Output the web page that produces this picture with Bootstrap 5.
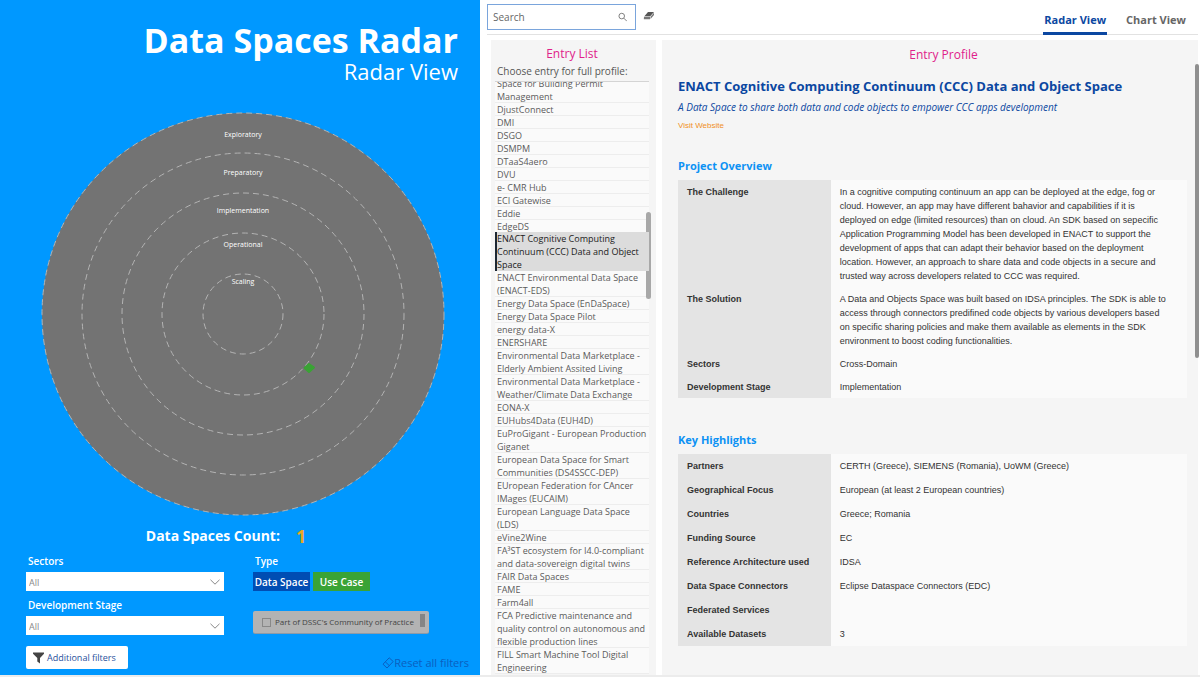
<!DOCTYPE html>
<html lang="en">
<head>
<meta charset="utf-8">
<meta name="viewport" content="width=device-width, initial-scale=1">
<title>Data Spaces Radar</title>
<link href="https://cdn.jsdelivr.net/npm/bootstrap@5.3.0/dist/css/bootstrap.min.css" rel="stylesheet">
<style>
  :root { --sky: #0098ff; --navy: #0b47a1; --pink: #e0218a; --orange: #f0901e; --panel: #f5f5f5; }
  body { font-family: "Open Sans", "Noto Sans", sans-serif; font-size: 9px; color: #555; background: #fff; }
  .app { min-height: 100vh; border-bottom: 2px solid #ececec; }

  /* radar side */
  .radar-side { background: var(--sky); color: #fff; flex: 0 0 100%; padding-bottom: 2px; }
  .radar-title { font-size: 34px; line-height: 40px; font-weight: 700; }
  .radar-sub { font-size: 22px; line-height: 22px; font-weight: 400; }
  .radar-head { padding: 20px 22px 0 26px; }
  .radar-plot { padding: 30px 20px 0 26px; }
  .radar-plot svg { width: 100%; max-width: 404px; }
  .radar-plot text { font-size: 7px; fill: #fff; text-anchor: middle; }
  .count-line { font-size: 14px; line-height: 20px; font-weight: 700; padding: 10px 28px 0 0; }
  .count-line output { color: #eba722; font-size: 18px; }
  .filters { padding: 7px 11px 0 26px; }
  .filter-col { width: 198px; }
  .filter-label { font-size: 10px; line-height: 16px; font-weight: 600; padding-left: 2px; margin-bottom: 3px; display: block; }
  .filter-select { height: 19px; padding: 2px 20px 0 3px; font-size: 9px; line-height: 16px; color: #888; border: 0; border-radius: 0; margin-bottom: 6px;
    background: #fff url("data:image/svg+xml,%3Csvg xmlns='http://www.w3.org/2000/svg' viewBox='0 0 10 6'%3E%3Cpath d='M.5.8 5 5.2 9.500.8' fill='none' stroke='%23888'/%3E%3C/svg%3E") no-repeat right 4px center / 10px 6px; }
  .type-col { margin-left: 5px; }
  .type-buttons { gap: 3px; }
  .btn-type { width: 57px; height: 19px; padding: 0; font-size: 10px; line-height: 18px; font-weight: 600; color: #fff; border: 0; border-radius: 0; }
  .btn-type.is-space { background: #004db3; }
  .btn-type.is-case { background: #3aa335; }
  .practice { width: 176px; height: 22px; margin-top: 20px; padding: 0 4px 0 9px; background: #b3b3b3; color: #444; font-size: 8px; border-radius: 2px; box-shadow: 0 1px 0 #8c9aa8; gap: 4px; white-space: nowrap; }
  .practice input { width: 9px; height: 9px; margin: 0; appearance: none; border: 1px solid #888; }
  .practice i { width: 5px; height: 13px; background: #858585; margin: 0 0 3px auto; }
  .btn-more { height: 23px; padding: 0 12px 0 7px; margin-top: 5px; gap: 3px; font-size: 9px; line-height: 23px; background: #fff; color: #27509b; border: 0; border-radius: 2px; }
  .reset-link { color: #0b5fc0; font-size: 11px; line-height: 12px; text-decoration: none; }

  /* work side */
  .work-side { min-width: 0; padding: 0 2px 0 7px; }
  .topbar { height: 35px; border-bottom: 1px solid #e2e2e2; }
  .search-box { width: 149px; height: 26px; border: 1px solid #7aa5dc; border-radius: 0; margin-top: 4px; padding: 0 8px 0 5px; }
  .search-box input { font-size: 10px; color: #666; padding: 0; border: 0; box-shadow: none !important; background: none; min-width: 0; }
  .search-box input::placeholder { color: #666; }
  .erase { margin: 10px 0 0 6px; padding: 0; line-height: 1; }
  .view-tabs { gap: 18px; padding-right: 11px; }
  .view-tabs .nav-link { font-size: 11px; line-height: 24px; height: 35px; font-weight: 700; padding: 8px 1px 0; color: #666; border-radius: 0; border-bottom: 3px solid transparent; }
  .view-tabs .nav-link.active { color: var(--navy); border-color: var(--navy); }
  .panels { padding-top: 5px; gap: 6px; }
  .panel-title { font-size: 12px; line-height: 16px; color: var(--pink); text-align: center; font-weight: 400; margin: 0; }

  .entry-panel { background: var(--panel); margin-left: 4px; flex: 0 0 165px; padding: 6px 7px 1px 4px; }
  .entry-hint { font-size: 10px; line-height: 16px; height: 20px; padding: 1px 0 0 2px; margin: 0; border-bottom: 1px solid #d4d4d4; }
  .entry-scroll { flex: 1 1 0; min-height: 200px; overflow: hidden; background: #fafafa; }
  .entry-list { line-height: 13px; }
  .entry-list .list-group-item { padding: 0 0 0 2px; border: 0; background: none; color: #5a5a5a; box-shadow: inset 0 -1px #ededed; }
  .entry-list .list-group-item.active { background: #dcdcdc; color: #222; box-shadow: inset 2px 0 #1c2733; }
  .thumb { position: absolute; width: 5px; border-radius: 3px; background: #a8a8a8; }
  .entry-thumb { top: 172px; right: 5px; height: 87px; }
  .profile-thumb { top: 24px; right: -1px; height: 294px; width: 4px; background: #8f8f8f; }

  .profile-panel { background: var(--panel); min-width: 0; padding: 7px 11px 16px 16px; }
  .profile-panel .panel-title { padding-left: 22px; }
  .profile-name { font-size: 13px; line-height: 20px; font-weight: 700; color: var(--navy); margin: 13px 0 0; }
  .profile-tag { font-size: 10px; line-height: 16px; font-style: italic; color: var(--navy); margin: 3px 0 5px; }
  .site-link { font-family: "Liberation Sans", Arial, sans-serif; font-size: 8px; line-height: 12px; color: var(--orange); text-decoration: none; display: block; }
  .section-name { font-size: 11px; line-height: 16px; font-weight: 700; color: #0d92f4; margin: 26px 0 6px; }
  .section-gap { margin-top: 34px; }
  .facts { font-family: "Liberation Sans", Arial, sans-serif; font-size: 9px; line-height: 14px; color: #333; margin: 0; }
  .facts > tbody > tr > * { border: 0; vertical-align: top; color: #333; }
  .facts th { width: 30%; background: #e4e4e4; padding: 5px 9px 4px; }
  .facts td { background: #fafafa; padding: 5px 20px 4px 9px; }
  .facts-even th, .facts-even td { padding-bottom: 5px; }

  @media (min-width: 992px) {
    .app { height: 100vh; min-height: 640px; }
    .radar-side { flex: 0 0 40%; }
  }
</style>
</head>
<body>
<div class="app d-flex flex-wrap flex-lg-nowrap">

  <section class="radar-side d-flex flex-column">
    <header class="radar-head text-end">
      <h1 class="radar-title mb-0">Data Spaces Radar</h1>
      <p class="radar-sub mb-0">Radar View</p>
    </header>

    <div class="radar-plot text-center">
      <svg class="d-block mx-auto" viewBox="0 0 404 404" role="img" aria-label="Radar of development stages">
        <circle cx="202" cy="202" r="201" fill="#737373"/>
        <g fill="none" stroke="#b4b4b4" stroke-width="1" stroke-dasharray="6 4">
          <circle cx="202" cy="202" r="201"/>
          <circle cx="202" cy="202" r="161"/>
          <circle cx="202" cy="202" r="121"/>
          <circle cx="202" cy="202" r="81"/>
          <circle cx="202" cy="202" r="40"/>
        </g>
        <text x="202" y="25">Exploratory</text>
        <text x="202" y="63">Preparatory</text>
        <text x="202" y="101">Implementation</text>
        <text x="202" y="135">Operational</text>
        <text x="202" y="172">Scaling</text>
        <path d="M268 252 273 255.500 268 260 263.500 256Z" fill="#3aa335" stroke="#3aa335" stroke-width="2" stroke-linejoin="round"/>
      </svg>
    </div>

    <div class="count-line d-flex justify-content-center align-items-center gap-3">
      <span>Data Spaces Count:</span><output>1</output>
    </div>

    <div class="filters">
      <div class="d-flex gap-4">
        <div class="filter-col">
          <label class="filter-label" for="sectors">Sectors</label>
          <select id="sectors" class="form-select filter-select"><option>All</option></select>
          <label class="filter-label" for="stage">Development Stage</label>
          <select id="stage" class="form-select filter-select"><option>All</option></select>
        </div>
        <div class="type-col">
          <span class="filter-label">Type</span>
          <div class="type-buttons d-flex">
            <button type="button" class="btn btn-type is-space">Data Space</button>
            <button type="button" class="btn btn-type is-case">Use Case</button>
          </div>
          <label class="practice d-flex align-items-center"><input type="checkbox">Part of DSSC's Community of Practice<i></i></label>
        </div>
      </div>
      <div class="d-flex justify-content-between align-items-end">
        <button type="button" class="btn btn-more d-flex align-items-center">
          <svg width="11" height="12" viewBox="0 0 11 12"><path d="M0 .5h11v1.300L7 6v5.500L4.300 9.500V6L0 1.800Z" fill="#444"/></svg>
          Additional filters
        </button>
        <a class="reset-link d-flex align-items-center" href="#"><svg width="12" height="12" viewBox="0 0 12 12" fill="none" stroke="#0b5fc0"><path d="M7.200.8 11.200 4.500 5 11 1 7.200ZM3.300 4.800 7.300 8.600"/></svg>Reset all filters</a>
      </div>
    </div>
  </section>

  <main class="work-side d-flex flex-column flex-grow-1">
    <div class="topbar d-flex align-items-start">
      <div class="search-box d-flex align-items-center">
        <input type="search" class="form-control" placeholder="Search" aria-label="Search">
        <svg width="10" height="10" viewBox="0 0 10 10" fill="none" stroke="#777"><circle cx="4" cy="4" r="3"/><path d="m6.200 6.200 3.300 3.300"/></svg>
      </div>
      <button type="button" class="btn erase" aria-label="Clear"><svg class="d-block" width="12" height="10" viewBox="0 0 12 10"><path d="M5 1H11L7.200 5.300H1.400Z" fill="#555"/><path d="M1 5.800H7V8.300H.8Z M7.500 5.800 11 1.800V4L7.500 8Z" fill="#777"/></svg></button>
      <nav class="nav view-tabs ms-auto">
        <a class="nav-link active" href="#">Radar View</a>
        <a class="nav-link" href="#">Chart View</a>
      </nav>
    </div>

    <div class="panels d-flex flex-grow-1">
      <aside class="entry-panel d-flex flex-column position-relative">
        <h2 class="panel-title">Entry List</h2>
        <p class="entry-hint">Choose entry for full profile:</p>
        <div class="entry-scroll d-flex flex-column justify-content-end">
          <ul class="list-group list-group-flush entry-list">
            <li class="list-group-item">Space for Building Permit Management</li>
            <li class="list-group-item">DjustConnect</li>
            <li class="list-group-item">DMI</li>
            <li class="list-group-item">DSGO</li>
            <li class="list-group-item">DSMPM</li>
            <li class="list-group-item">DTaaS4aero</li>
            <li class="list-group-item">DVU</li>
            <li class="list-group-item">e- CMR Hub</li>
            <li class="list-group-item">ECI Gatewise</li>
            <li class="list-group-item">Eddie</li>
            <li class="list-group-item">EdgeDS</li>
            <li class="list-group-item active" aria-current="true">ENACT Cognitive Computing Continuum (CCC) Data and Object Space</li>
            <li class="list-group-item">ENACT Environmental Data Space (ENACT-EDS)</li>
            <li class="list-group-item">Energy Data Space (EnDaSpace)</li>
            <li class="list-group-item">Energy Data Space Pilot</li>
            <li class="list-group-item">energy data-X</li>
            <li class="list-group-item">ENERSHARE</li>
            <li class="list-group-item">Environmental Data Marketplace - Elderly Ambient Assited Living</li>
            <li class="list-group-item">Environmental Data Marketplace - Weather/Climate Data Exchange</li>
            <li class="list-group-item">EONA-X</li>
            <li class="list-group-item">EUHubs4Data (EUH4D)</li>
            <li class="list-group-item">EuProGigant - European Production Giganet</li>
            <li class="list-group-item">European Data Space for Smart Communities (DS4SSCC-DEP)</li>
            <li class="list-group-item">EUropean Federation for CAncer IMages (EUCAIM)</li>
            <li class="list-group-item">European Language Data Space (LDS)</li>
            <li class="list-group-item">eVine2Wine</li>
            <li class="list-group-item">FA³ST ecosystem for I4.0-compliant and data-sovereign digital twins</li>
            <li class="list-group-item">FAIR Data Spaces</li>
            <li class="list-group-item">FAME</li>
            <li class="list-group-item">Farm4all</li>
            <li class="list-group-item">FCA Predictive maintenance and quality control on autonomous and flexible production lines</li>
            <li class="list-group-item">FILL Smart Machine Tool Digital Engineering</li>
          </ul>
        </div>
        <div class="thumb entry-thumb"></div>
      </aside>

      <article class="profile-panel flex-grow-1 position-relative">
        <h2 class="panel-title">Entry Profile</h2>
        <h3 class="profile-name">ENACT Cognitive Computing Continuum (CCC) Data and Object Space</h3>
        <p class="profile-tag">A Data Space to share both data and code objects to empower CCC apps development</p>
        <a class="site-link" href="#">Visit Website</a>

        <h4 class="section-name">Project Overview</h4>
        <table class="table facts">
          <tbody>
            <tr><th scope="row">The Challenge</th><td>In a cognitive computing continuum an app can be deployed at the edge, fog or cloud. However, an app may have different bahavior and capabilities if it is deployed on edge (limited resources) than on cloud. An SDK based on sepecific Application Programming Model has been developed in ENACT to support the development of apps that can adapt their behavior based on the deployment location. However, an approach to share data and code objects in a secure and trusted way across developers related to CCC was required.</td></tr>
            <tr><th scope="row">The Solution</th><td>A Data and Objects Space was built based on IDSA principles. The SDK is able to access through connectors predifined code objects by various developers based on specific sharing policies and make them available as elements in the SDK environment to boost coding functionalities.</td></tr>
            <tr><th scope="row">Sectors</th><td>Cross-Domain</td></tr>
            <tr><th scope="row">Development Stage</th><td>Implementation</td></tr>
          </tbody>
        </table>

        <h4 class="section-name section-gap">Key Highlights</h4>
        <table class="table facts facts-even">
          <tbody>
            <tr><th scope="row">Partners</th><td>CERTH (Greece), SIEMENS (Romania), UoWM (Greece)</td></tr>
            <tr><th scope="row">Geographical Focus</th><td>European (at least 2 European countries)</td></tr>
            <tr><th scope="row">Countries</th><td>Greece; Romania</td></tr>
            <tr><th scope="row">Funding Source</th><td>EC</td></tr>
            <tr><th scope="row">Reference Architecture used</th><td>IDSA</td></tr>
            <tr><th scope="row">Data Space Connectors</th><td>Eclipse Dataspace Connectors (EDC)</td></tr>
            <tr><th scope="row">Federated Services</th><td></td></tr>
            <tr><th scope="row">Available Datasets</th><td>3</td></tr>
          </tbody>
        </table>
        <div class="thumb profile-thumb"></div>
      </article>
    </div>
  </main>
</div>
<script src="https://cdn.jsdelivr.net/npm/bootstrap@5.3.0/dist/js/bootstrap.bundle.min.js"></script>
</body>
</html>
